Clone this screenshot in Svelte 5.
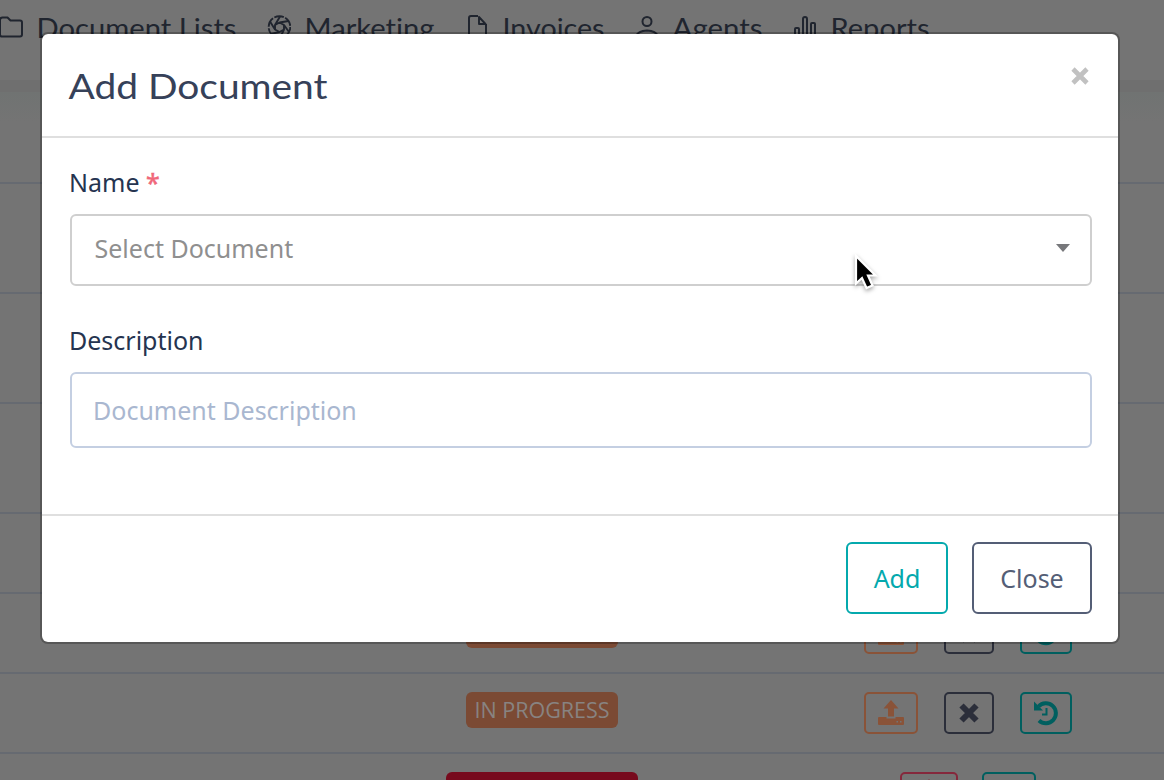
<script>
  const nav = [
    { icon: 'folder', label: 'Document Lists', width: 200 },
    { icon: 'aperture', label: 'Marketing', width: 130 },
    { icon: 'file', label: 'Invoices', width: 102 },
    { icon: 'user', label: 'Agents', width: 90 },
    { icon: 'chart', label: 'Reports', width: 99 }
  ];
  const emptyRows = [90, 110, 110, 110, 80];
  const progressRows = [0, 1];
</script>

<div class="page">
  <nav>
    {#each nav as item}
      <div class="nav-item">
        <svg class="nav-icon" width="24" height="26" viewBox="0 0 24 26" fill="none" stroke="#20252f" stroke-width="2" stroke-linejoin="round">
          {#if item.icon === 'folder'}
            <path d="M1 6Q1 3.500 3.5 3.500H8.5L11.5 6.500H21Q23 6.500 23 8.500V20.500Q23 22.500 21 22.500H3Q1 22.500 1 20.500Z" />
          {:else if item.icon === 'aperture'}
            <circle cx="12.5" cy="13" r="10.8" stroke-width="1.9" stroke-dasharray="9.8 1.5" />
            <path stroke-width="1.9" d="M12.5 8.5L17 11V15.5L12.5 18L8 15.5V11ZM8 11L13 2.5M12.5 8.5L21.5 7M17 11L22 18M17 15.5L13 24M12.5 18L3.5 20M8 15.5L3 7.5" />
          {:else if item.icon === 'file'}
            <path d="M13 2H6Q4 2 4 4V22Q4 24 6 24H19Q21 24 21 22V10" />
            <path d="M14 3V10H20.500Z" stroke-width="1.900" />
          {:else if item.icon === 'user'}
            <circle cx="12" cy="7.500" r="4.500" />
            <path d="M1 24V22Q3 17 12 16.500Q21 17 23 22V24" />
          {:else}
            <path d="M2 25V15Q2 14 3 14H5Q6 14 6 15V25M10 25V5Q10 3 12 3T14 5V25M18 25V10Q18 9 19 9H21Q22 9 22 10V25" />
          {/if}
        </svg>
        <svg class="nav-label" width={item.width} height="36" viewBox={`0 0 ${item.width} 36`}>
          <text x="-0.500" y="27" textLength={item.width} lengthAdjust="spacingAndGlyphs">{item.label}</text>
        </svg>
      </div>
    {/each}
  </nav>
  <div class="band"></div>
  <main>
    {#each emptyRows as height}
      <div class="row" style="height: {height}px"></div>
    {/each}
    {#each progressRows as _}
      <div class="row progress">
        <span class="badge">IN PROGRESS</span>
        <div class="actions">
          <button class="action upload" aria-label="Upload">
            <svg width="26" height="26" viewBox="0 0 26 26" fill="currentColor">
              <path d="M13 0L20.500 8.500H16V16.500H10V8.500H5.500Z" />
              <path fill-rule="evenodd" d="M1 17H8.500V18.500H17.500V17H25Q26 17 26 18V24Q26 25 25 25H1Q0 25 0 24V18Q0 17 1 17ZM18.500 21V22.500H20V21ZM22 21V22.500H23.500V21Z" />
            </svg>
          </button>
          <button class="action remove" aria-label="Remove">
            <svg width="20" height="20" viewBox="0 0 20 20" stroke="currentColor" stroke-width="6">
              <path d="M2.500 2.500L17.500 17.500M17.500 2.500L2.500 17.500" />
            </svg>
          </button>
          <button class="action history" aria-label="History">
            <svg width="26" height="26" viewBox="0 0 26 26" fill="none" stroke="currentColor">
              <path d="M5.500 6.500A10 10 0 1 1 6 20.500" stroke-width="4" />
              <path d="M1 1.500V10.500H10Z" fill="currentColor" stroke="none" />
              <path d="M13.500 8V14.500H9" stroke-width="2" />
            </svg>
          </button>
        </div>
      </div>
    {/each}
    <div class="last-row">
      <span class="badge danger"></span>
      <button class="action restore" aria-label="Restore"><svg width="6" height="8" viewBox="0 0 6 8" fill="currentColor"><path d="M3 0L6 4H0Z" /></svg></button>
      <button class="action more" aria-label="More"></button>
    </div>
  </main>
</div>

<div class="modal">
  <header>
    <svg class="title" width="262" height="48" viewBox="0 0 262 48">
      <text x="-0.500" y="36.500" textLength="259" lengthAdjust="spacingAndGlyphs">Add Document</text>
    </svg>
    <svg class="dismiss" width="18" height="18" viewBox="0 0 18 18" stroke="#c1c1c1" stroke-width="4.600"><path d="M2 2L16 16M16 2L2 16" /></svg>
  </header>
  <section>
    <div class="label">Name <span>*</span></div>
    <div class="field select">
      <span>Select Document</span>
      <svg width="14" height="8" viewBox="0 0 14 8"><path d="M0 0H14L7 8Z" fill="#77787b" /></svg>
    </div>
    <div class="label second">Description</div>
    <div class="field input"><span>Document Description</span></div>
  </section>
  <footer>
    <button class="add">Add</button>
    <button class="close">Close</button>
  </footer>
</div>

<svg class="cursor" width="32" height="42" viewBox="0 0 32 42">
  <path d="M4 4V31.500L10 26L14.500 36L20.500 33.500L16 23.500H23.500Z" fill="#000" stroke="#fff" stroke-width="2.200" />
</svg>

<style>
  :global(body) { margin: 0; overflow: hidden; background: #747474; }
  * { box-sizing: border-box; }
  .page, .modal { font-family: "Noto Sans", "Open Sans", sans-serif; }
  .page { width: 1164px; height: 780px; overflow: hidden; background: #747474; }
  nav { display: flex; gap: 30px; height: 80px; padding-top: 11px; margin-left: -1px; }
  .nav-item { display: flex; gap: 14px; align-items: flex-start; }
  .nav-icon { flex: none; margin-top: 3px; }
  .nav-label { flex: none; overflow: visible; font-family: Lato, sans-serif; font-size: 26px; font-variant-ligatures: none; fill: #20252f; }
  .band { height: 12px; background: #6f6f6f; }
  .row { border-bottom: 2px solid #666a71; }
  .row:first-child { height: 92px !important; background: linear-gradient(#707372, #747474 30px); }
  .progress { display: flex; height: 80px; padding: 18px 92px 0 466px; justify-content: space-between; }
  .badge { display: flex; width: 152px; height: 36px; padding-bottom: 1px; border-radius: 6px; background: #7b4a34; color: #888381; font-size: 21.500px; align-items: center; justify-content: center; font-family: "Open Sans", sans-serif; white-space: nowrap; }
  .actions { display: flex; gap: 26px; }
  button { font: inherit; padding: 0; background: none; }
  .action { display: flex; align-items: center; justify-content: center; height: 42px; border: 2px solid; border-radius: 5px; }
  .upload { width: 54px; color: #8a5338; }
  .remove { width: 50px; color: #2b2e3a; }
  .history { width: 52px; color: #005f5f; }
  .last-row { display: flex; padding: 18px 0 0 446px; }
  .danger { width: 192px; background: #770a1d; }
  .restore { width: 58px; margin-left: 262px; color: #85283c; align-items: flex-start; padding-top: 5px; }
  .more { width: 54px; margin-left: 24px; color: #005f5f; }
  .modal { position: absolute; left: 40px; top: 32px; width: 1080px; height: 612px; display: flex; flex-direction: column; border: 2px solid rgba(0,0,0,.25); border-radius: 8px; background: #fff; background-clip: padding-box; }
  header { display: flex; justify-content: space-between; height: 104px; flex: none; padding: 28px 29px 0 27px; border-bottom: 2px solid #dfdfdf; }
  .title { overflow: visible; font-family: Lato, sans-serif; font-size: 34px; fill: #364159; }
  .dismiss { margin-top: 5px; }
  section { height: 376px; padding: 26px 26px 0 28px; }
  .label { height: 36px; line-height: 36px; font-size: 25px; color: #253450; margin-left: -1px; }
  .label span { color: #f0677a; -webkit-text-stroke: .5px #f0677a; }
  .field { display: flex; align-items: center; justify-content: space-between; font-size: 25px; border: 2px solid #cfcfcf; border-radius: 6px; }
  .select { height: 72px; margin-top: 14px; padding: 0 20px 5px 22.500px; color: #8f8f8f; }
  .second { margin-top: 36px; }
  .input { height: 76px; margin-top: 14px; padding-left: 21px; border-color: #c4cfe2; color: #a9b7d0; }
  footer { display: flex; justify-content: flex-end; gap: 24px; padding: 26px 26px 0 0; height: 128px; border-top: 2px solid #dfdfdf; }
  footer button { height: 72px; border: 2px solid; border-radius: 6px; font-size: 25px; }
  .add { width: 102px; color: #04a9ad; }
  .close { width: 120px; color: #545e76; }
  .cursor { position: absolute; left: 852px; top: 252px; filter: drop-shadow(0 2px 2px rgba(0,0,0,.35)); }
</style>
